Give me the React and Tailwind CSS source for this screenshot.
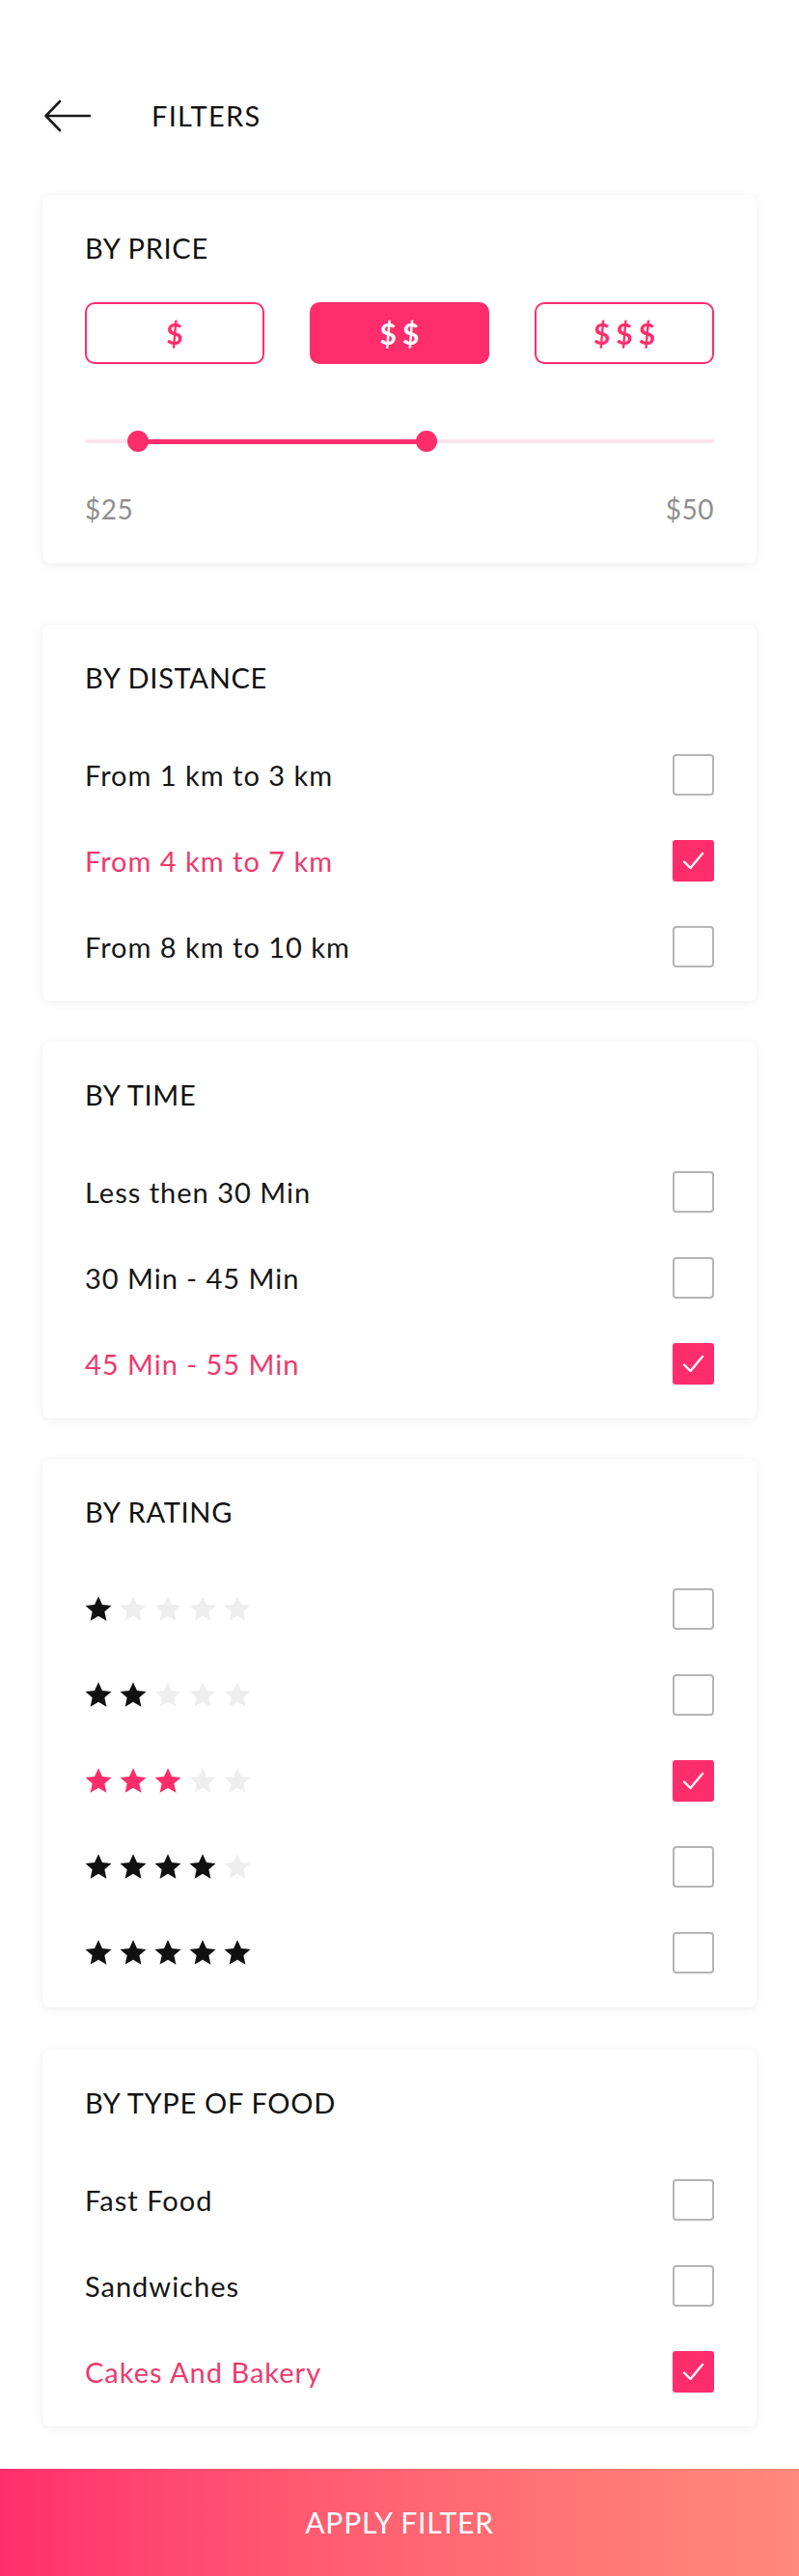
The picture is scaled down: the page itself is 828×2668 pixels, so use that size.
import React, { useState } from 'react'

const PINK = '#ff2d6c'

function Check({ on }){
  if (on) return (
    <div className="w-[43px] h-[43px] rounded-[3px] bg-[#ff2d6c] flex items-center justify-center shrink-0">
      <svg width="43" height="43" viewBox="0 0 43 43" fill="none">
        <path d="M12 22.5l6.5 6.5L31 14" stroke="#fff" strokeWidth="2.4" strokeLinecap="round" strokeLinejoin="round"/>
      </svg>
    </div>
  )
  return <div className="w-[43px] h-[43px] rounded-[4px] border-2 border-[#b5b5b5] bg-white shrink-0"/>
}

function Star({ color }){
  return (
    <svg width="30" height="29" viewBox="0 0 24 23" fill={color}>
      <path d="M12 .8l3.2 7 7.6.8-5.7 5.1 1.6 7.5L12 17.3l-6.7 3.9 1.6-7.5L1.2 8.6l7.6-.8z" strokeLinejoin="round"/>
    </svg>
  )
}

function Card({ title, children, className='' }){
  return (
    <div className={`mx-[44px] bg-white rounded-[8px] shadow-[0_2px_12px_rgba(0,0,0,0.07)] px-[44px] pt-[37px] ${className}`}>
      <h2 className="text-[29px] leading-[36px] text-[#111] tracking-[0.7px]">{title}</h2>
      {children}
    </div>
  )
}

function Row({ label, on }){
  return (
    <div className="h-[89px] flex items-center justify-between">
      <span className={`text-[29px] leading-[36px] tracking-[1px] ${on ? 'text-[#ee3a6e]' : 'text-[#161616]'}`}>{label}</span>
      <Check on={on}/>
    </div>
  )
}

function ListCard({ title, items, sel, className }){
  return (
    <Card title={title} className={`pb-[12px] ${className}`}>
      <div className="mt-[38px]">
        {items.map((it, i) => <Row key={it} label={it} on={i===sel}/>)}
      </div>
    </Card>
  )
}

export default function App(){
  const [price, setPrice] = useState(1)
  const prices = ['$', '$$', '$$$']

  return (
    <div className="w-[828px] min-h-[2668px] bg-white flex flex-col" style={{ fontFamily: 'Lato, "Open Sans", sans-serif' }}>
      {/* header */}
      <div className="pt-[90px] h-[150px] flex items-center pl-[45px]">
        <div className="h-[60px] flex items-center">
          <svg width="50" height="36" viewBox="0 0 50 36" fill="none">
            <path d="M48 18H3M17 3L2.5 18 17 33" stroke="#1c1c1c" strokeWidth="2.6" strokeLinecap="round" strokeLinejoin="round"/>
          </svg>
          <span className="ml-[62px] text-[29px] leading-[36px] text-[#111] tracking-[1.3px]">FILTERS</span>
        </div>
      </div>

      <Card title="BY PRICE" className="mt-[52px] pb-[38px]">
        <div className="mt-[38px] flex justify-between">
          {prices.map((p, i) => (
            <button key={p} onClick={()=>setPrice(i)}
              className={`w-[186px] h-[64px] rounded-[10px] border-2 border-[#ff2d6c] flex items-center justify-center text-[30px] font-bold tracking-[6px] pl-[6px] ${i===price ? 'bg-[#ff2d6c] text-white' : 'bg-white text-[#ff2d6c]'}`}>
              {p}
            </button>
          ))}
        </div>
        <div className="mt-[68px] relative h-[24px]">
          <div className="absolute left-0 right-0 top-[10px] h-[4px] rounded-full bg-[#fde4ec]"/>
          <div className="absolute left-[55px] w-[299px] top-[9.5px] h-[5px] bg-[#ff2d6c]"/>
          <div className="absolute left-[44px] top-[1px] w-[22px] h-[22px] rounded-full bg-[#ff2d6c]"/>
          <div className="absolute left-[343px] top-[1px] w-[22px] h-[22px] rounded-full bg-[#ff2d6c]"/>
        </div>
        <div className="mt-[40px] flex justify-between text-[28px] leading-[36px] text-[#8f8f8f] tracking-[0.5px]">
          <span>$25</span>
          <span>$50</span>
        </div>
      </Card>

      <ListCard className="mt-[64px]" title="BY DISTANCE" items={['From 1 km to 3 km', 'From 4 km to 7 km', 'From 8 km to 10 km']} sel={1}/>
      <ListCard className="mt-[42px]" title="BY TIME" items={['Less then 30 Min', '30 Min - 45 Min', '45 Min - 55 Min']} sel={2}/>

      <Card title="BY RATING" className="mt-[42px] pb-[12px]">
        <div className="mt-[38px]">
          {[1,2,3,4,5].map(n => (
            <div key={n} className="h-[89px] flex items-center justify-between">
              <div className="flex gap-[6px] -ml-[1px]">
                {[1,2,3,4,5].map(s => (
                  <Star key={s} color={s<=n ? (n===3 ? PINK : '#111') : '#eeeeee'}/>
                ))}
              </div>
              <Check on={n===3}/>
            </div>
          ))}
        </div>
      </Card>

      <ListCard className="mt-[44px]" title="BY TYPE OF FOOD" items={['Fast Food', 'Sandwiches', 'Cakes And Bakery']} sel={2}/>

      <button className="mt-[44px] h-[111px] w-full bg-gradient-to-r from-[#ff2d6c] to-[#ff8a78] text-white text-[30px] tracking-[0.8px]">
        APPLY FILTER
      </button>
    </div>
  )
}
